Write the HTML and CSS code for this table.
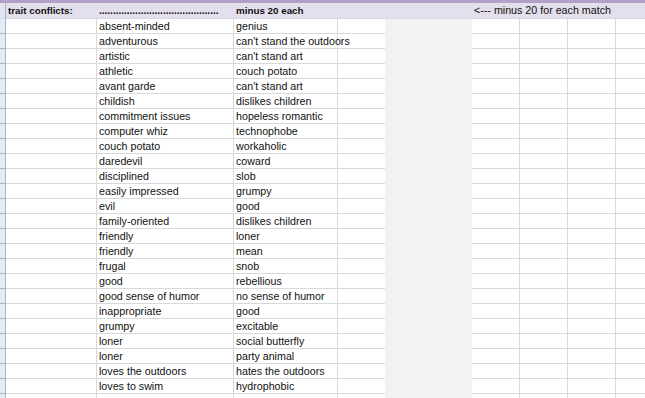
FILE: index.html
```html
<!DOCTYPE html>
<html>
<head>
<meta charset="utf-8">
<link rel="stylesheet" href="styles.css">
</head>
<body>
<div class="sheet">
  <div class="topbar"></div>
  <div class="row head">
    <div class="c strip"></div>
    <div class="c a t bold">trait conflicts:</div>
    <div class="c b bold dots">...........................................</div>
    <div class="c cc t bold">minus 20 each</div>
    <div class="c d"></div>
    <div class="c e"></div>
    <div class="c f t">&lt;--- minus 20 for each match</div>
    <div class="c g"></div>
    <div class="c h"></div>
    <div class="c i"></div>
  </div>
  <div class="row"><div class="c strip"></div><div class="c a"></div><div class="c b">absent-minded</div><div class="c cc t">genius</div><div class="c d"></div><div class="c e"></div><div class="c f"></div><div class="c g"></div><div class="c h"></div><div class="c i"></div></div>
  <div class="row"><div class="c strip"></div><div class="c a"></div><div class="c b">adventurous</div><div class="c cc t">can't stand the outdoors</div><div class="c d"></div><div class="c e"></div><div class="c f"></div><div class="c g"></div><div class="c h"></div><div class="c i"></div></div>
  <div class="row"><div class="c strip"></div><div class="c a"></div><div class="c b">artistic</div><div class="c cc t">can't stand art</div><div class="c d"></div><div class="c e"></div><div class="c f"></div><div class="c g"></div><div class="c h"></div><div class="c i"></div></div>
  <div class="row"><div class="c strip"></div><div class="c a"></div><div class="c b">athletic</div><div class="c cc t">couch potato</div><div class="c d"></div><div class="c e"></div><div class="c f"></div><div class="c g"></div><div class="c h"></div><div class="c i"></div></div>
  <div class="row"><div class="c strip"></div><div class="c a"></div><div class="c b">avant garde</div><div class="c cc t">can't stand art</div><div class="c d"></div><div class="c e"></div><div class="c f"></div><div class="c g"></div><div class="c h"></div><div class="c i"></div></div>
  <div class="row"><div class="c strip"></div><div class="c a"></div><div class="c b">childish</div><div class="c cc t">dislikes children</div><div class="c d"></div><div class="c e"></div><div class="c f"></div><div class="c g"></div><div class="c h"></div><div class="c i"></div></div>
  <div class="row"><div class="c strip"></div><div class="c a"></div><div class="c b">commitment issues</div><div class="c cc t">hopeless romantic</div><div class="c d"></div><div class="c e"></div><div class="c f"></div><div class="c g"></div><div class="c h"></div><div class="c i"></div></div>
  <div class="row"><div class="c strip"></div><div class="c a"></div><div class="c b">computer whiz</div><div class="c cc t">technophobe</div><div class="c d"></div><div class="c e"></div><div class="c f"></div><div class="c g"></div><div class="c h"></div><div class="c i"></div></div>
  <div class="row"><div class="c strip"></div><div class="c a"></div><div class="c b">couch potato</div><div class="c cc t">workaholic</div><div class="c d"></div><div class="c e"></div><div class="c f"></div><div class="c g"></div><div class="c h"></div><div class="c i"></div></div>
  <div class="row"><div class="c strip"></div><div class="c a"></div><div class="c b">daredevil</div><div class="c cc t">coward</div><div class="c d"></div><div class="c e"></div><div class="c f"></div><div class="c g"></div><div class="c h"></div><div class="c i"></div></div>
  <div class="row"><div class="c strip"></div><div class="c a"></div><div class="c b">disciplined</div><div class="c cc t">slob</div><div class="c d"></div><div class="c e"></div><div class="c f"></div><div class="c g"></div><div class="c h"></div><div class="c i"></div></div>
  <div class="row"><div class="c strip"></div><div class="c a"></div><div class="c b">easily impressed</div><div class="c cc t">grumpy</div><div class="c d"></div><div class="c e"></div><div class="c f"></div><div class="c g"></div><div class="c h"></div><div class="c i"></div></div>
  <div class="row"><div class="c strip"></div><div class="c a"></div><div class="c b">evil</div><div class="c cc t">good</div><div class="c d"></div><div class="c e"></div><div class="c f"></div><div class="c g"></div><div class="c h"></div><div class="c i"></div></div>
  <div class="row"><div class="c strip"></div><div class="c a"></div><div class="c b">family-oriented</div><div class="c cc t">dislikes children</div><div class="c d"></div><div class="c e"></div><div class="c f"></div><div class="c g"></div><div class="c h"></div><div class="c i"></div></div>
  <div class="row"><div class="c strip"></div><div class="c a"></div><div class="c b">friendly</div><div class="c cc t">loner</div><div class="c d"></div><div class="c e"></div><div class="c f"></div><div class="c g"></div><div class="c h"></div><div class="c i"></div></div>
  <div class="row"><div class="c strip"></div><div class="c a"></div><div class="c b">friendly</div><div class="c cc t">mean</div><div class="c d"></div><div class="c e"></div><div class="c f"></div><div class="c g"></div><div class="c h"></div><div class="c i"></div></div>
  <div class="row"><div class="c strip"></div><div class="c a"></div><div class="c b">frugal</div><div class="c cc t">snob</div><div class="c d"></div><div class="c e"></div><div class="c f"></div><div class="c g"></div><div class="c h"></div><div class="c i"></div></div>
  <div class="row"><div class="c strip"></div><div class="c a"></div><div class="c b">good</div><div class="c cc t">rebellious</div><div class="c d"></div><div class="c e"></div><div class="c f"></div><div class="c g"></div><div class="c h"></div><div class="c i"></div></div>
  <div class="row"><div class="c strip"></div><div class="c a"></div><div class="c b">good sense of humor</div><div class="c cc t">no sense of humor</div><div class="c d"></div><div class="c e"></div><div class="c f"></div><div class="c g"></div><div class="c h"></div><div class="c i"></div></div>
  <div class="row"><div class="c strip"></div><div class="c a"></div><div class="c b">inappropriate</div><div class="c cc t">good</div><div class="c d"></div><div class="c e"></div><div class="c f"></div><div class="c g"></div><div class="c h"></div><div class="c i"></div></div>
  <div class="row"><div class="c strip"></div><div class="c a"></div><div class="c b">grumpy</div><div class="c cc t">excitable</div><div class="c d"></div><div class="c e"></div><div class="c f"></div><div class="c g"></div><div class="c h"></div><div class="c i"></div></div>
  <div class="row"><div class="c strip"></div><div class="c a"></div><div class="c b">loner</div><div class="c cc t">social butterfly</div><div class="c d"></div><div class="c e"></div><div class="c f"></div><div class="c g"></div><div class="c h"></div><div class="c i"></div></div>
  <div class="row"><div class="c strip"></div><div class="c a"></div><div class="c b">loner</div><div class="c cc t">party animal</div><div class="c d"></div><div class="c e"></div><div class="c f"></div><div class="c g"></div><div class="c h"></div><div class="c i"></div></div>
  <div class="row"><div class="c strip"></div><div class="c a"></div><div class="c b">loves the outdoors</div><div class="c cc t">hates the outdoors</div><div class="c d"></div><div class="c e"></div><div class="c f"></div><div class="c g"></div><div class="c h"></div><div class="c i"></div></div>
  <div class="row"><div class="c strip"></div><div class="c a"></div><div class="c b">loves to swim</div><div class="c cc t">hydrophobic</div><div class="c d"></div><div class="c e"></div><div class="c f"></div><div class="c g"></div><div class="c h"></div><div class="c i"></div></div>
  <div class="row"><div class="c strip"></div><div class="c a"></div><div class="c b"></div><div class="c cc"></div><div class="c d"></div><div class="c e"></div><div class="c f"></div><div class="c g"></div><div class="c h"></div><div class="c i"></div></div>
</div>
</body>
</html>
```

FILE: styles.css
```css
html, body {
  margin: 0;
  padding: 0;
  background: #ffffff;
}
.sheet {
  width: 645px;
  height: 398px;
  overflow: hidden;
  font-family: "Liberation Sans", Arial, sans-serif;
  font-size: 10.7px;
  color: #111;
}
.topbar {
  height: 3px;
  background: #b1a0c7;
}
.row {
  display: grid;
  grid-template-columns: 6px 91px 137px 104px 47px 87px 48px 48px 48px 1fr;
  height: 15px;
}
.c {
  box-sizing: border-box;
  height: 15px;
  border-right: 1px solid #d9d9d9;
  border-bottom: 1px solid #d9d9d9;
  padding: 1px 0 0 2px;
  line-height: 13px;
  white-space: nowrap;
  overflow: visible;
}
.t {
  position: relative;
  z-index: 1;
}
.strip {
  background: #e4ecf7;
  border-right: 1px solid #9eb6ce;
  border-bottom: 1px solid #9eb6ce;
  padding: 0;
}
.d { border-right: none; }
.e {
  background: #f2f2f2;
  border-bottom: none;
  border-right: none;
}
.i { border-right: none; }
.head {
  height: 16px;
  background: #e4dfec;
}
.head .c {
  height: 16px;
  background: transparent;
  border-right: none;
  border-bottom: 1px solid #d9d9d9;
  line-height: 15px;
  padding-top: 0;
}
.head .strip {
  border-right: 1px solid #9eb6ce;
  background: #e4e4f0;
}
.bold {
  font-weight: bold;
  font-size: 9.8px;
}
.dots {
  font-size: 10px;
  overflow: hidden;
}
```
